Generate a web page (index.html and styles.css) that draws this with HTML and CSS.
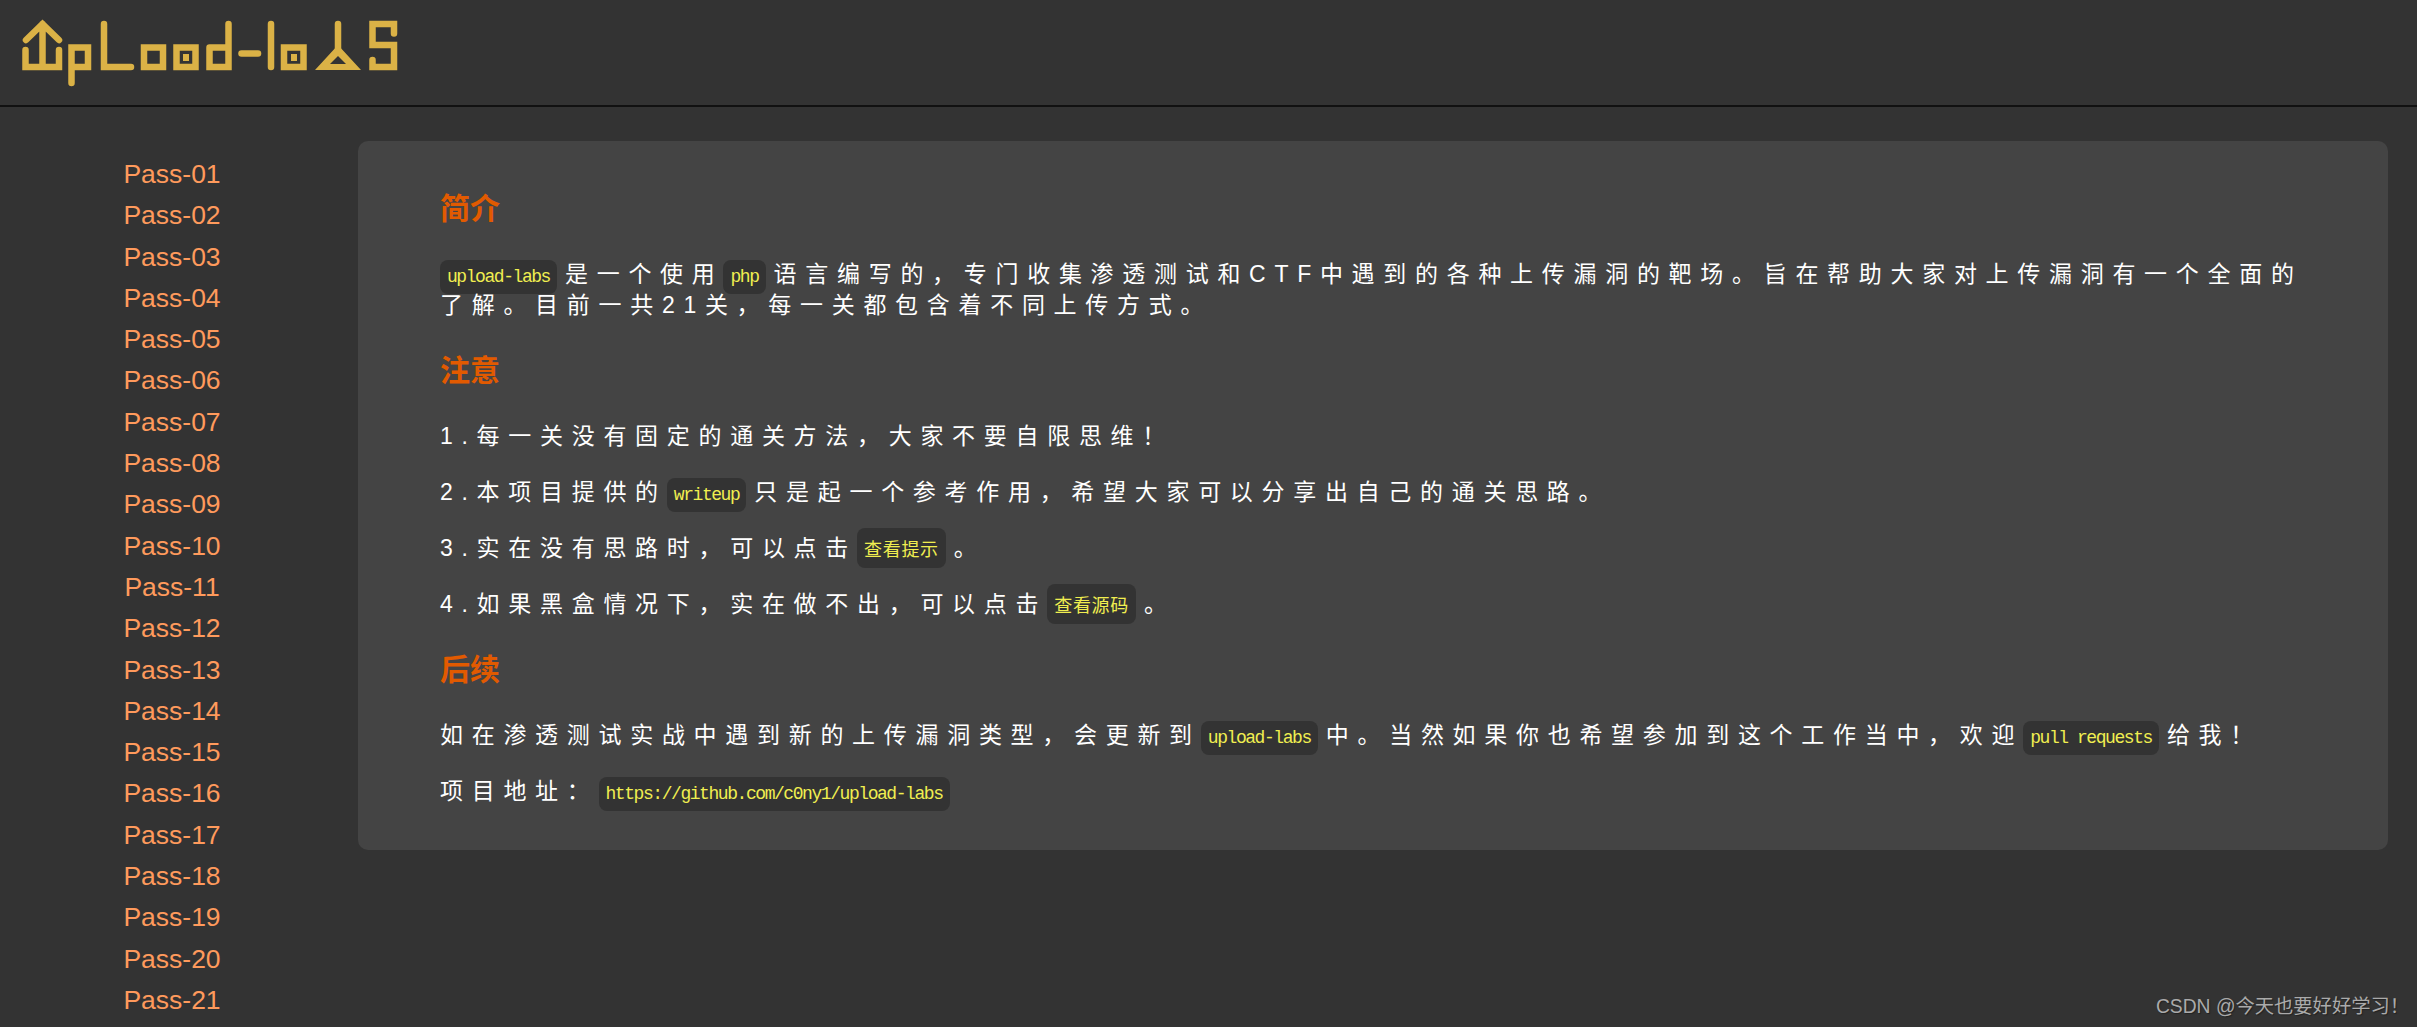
FILE: index.html
```html
<!DOCTYPE html>
<html lang="zh-CN">
<head>
<meta charset="utf-8">
<title>upload-labs</title>
<link rel="stylesheet" href="styles.css">
</head>
<body>
<header class="top">
  <svg class="logo" width="420" height="105" viewBox="0 0 420 105" role="img" aria-label="upload-labs">
    <g class="logo-line">
      <path d="M26 40 42.500 24 59 40M42.500 24V67M25.500 50V67H59V50"/>
      <path d="M71.500 83V47.500H88V67H71.500"/>
      <path d="M104 24V67H131"/>
      <path d="M144 47.500H163V67H144Z"/>
      <path d="M176.500 47.500H195.500V67H176.500Z"/>
      <path d="M209.500 47.500H228.500M228.500 24V67H209.500V47.500"/>
      <path d="M241.500 53.500H258"/>
      <path d="M271 24V67"/>
      <path d="M284 47.500H303.500V67H284Z"/>
      <path d="M338 24V50"/>
      <path d="M394 33.500V24H372.500V45H394V67H372.500V60"/>
    </g>
    <rect class="logo-fill" x="183" y="54" width="6" height="7"/>
    <rect class="logo-fill" x="291" y="54" width="6" height="7"/>
    <path class="logo-fill" fill-rule="evenodd" d="M338 45 361 70H315ZM338 56 330 64H346Z"/>
  </svg>
</header>
<div class="layout">
  <nav class="side">
    <a href="#">Pass-01</a><a href="#">Pass-02</a><a href="#">Pass-03</a><a href="#">Pass-04</a><a href="#">Pass-05</a><a href="#">Pass-06</a><a href="#">Pass-07</a><a href="#">Pass-08</a><a href="#">Pass-09</a><a href="#">Pass-10</a><a href="#">Pass-11</a><a href="#">Pass-12</a><a href="#">Pass-13</a><a href="#">Pass-14</a><a href="#">Pass-15</a><a href="#">Pass-16</a><a href="#">Pass-17</a><a href="#">Pass-18</a><a href="#">Pass-19</a><a href="#">Pass-20</a><a href="#">Pass-21</a>
  </nav>
  <main class="panel">
    <h1>简介</h1>
    <p><code>upload-labs</code>是一个使用<code>php</code>语言编写的，专门收集渗透测试和CTF中遇到的各种上传漏洞的靶场。旨在帮助大家对上传漏洞有一个全面的了解。目前一共21关，每一关都包含着不同上传方式。</p>
    <h1>注意</h1>
    <p>1.每一关没有固定的通关方法，大家不要自限思维！</p>
    <p>2.本项目提供的<code>writeup</code>只是起一个参考作用，希望大家可以分享出自己的通关思路。</p>
    <p>3.实在没有思路时，可以点击<code class="cjk">查看提示</code>。</p>
    <p>4.如果黑盒情况下，实在做不出，可以点击<code class="cjk">查看源码</code>。</p>
    <h1>后续</h1>
    <p>如在渗透测试实战中遇到新的上传漏洞类型，会更新到<code>upload-labs</code>中。当然如果你也希望参加到这个工作当中，欢迎<code>pull requests</code>给我！</p>
    <p>项目地址：<code>https://github.com/c0ny1/upload-labs</code></p>
  </main>
</div>
<div class="mark">CSDN @今天也要好好学习！</div>
</body>
</html>
```
FILE: styles.css
```css
html, body {
  margin: 0;
  height: 100%;
  overflow: hidden;
  background: #333;
}
body {
  position: relative;
  font-family: "Liberation Sans", "Noto Sans CJK SC", sans-serif;
}
.top {
  height: 105px;
  border-bottom: 2px solid #111;
}
.logo { display: block; }
.logo-line {
  fill: none;
  stroke: #dbb246;
  stroke-width: 6.500;
  stroke-linejoin: miter;
  stroke-linecap: round;
}
.logo-fill { fill: #dbb246; }
.layout {
  display: flex;
  align-items: flex-start;
  padding: 34px 29px 0 0;
}
.side {
  flex: 0 0 344px;
  margin: 13px 14px 0 0;
  display: flex;
  flex-direction: column;
  text-align: center;
}
.side a {
  color: #ff9a5c;
  font-size: 26.500px;
  line-height: 41.300px;
  text-decoration: none;
}
.panel {
  flex: 1;
  background: #444;
  border-radius: 10px;
  padding: 48px 82px 43px;
}
h1 {
  margin: 0 0 30px;
  color: #e25a00;
  font-size: 30px;
  font-weight: 700;
  line-height: 40px;
}
p + h1 { margin-top: 30px; }
p {
  margin: 0 0 25px;
  color: #fff;
  font-size: 23px;
  line-height: 31px;
  letter-spacing: 8.700px;
}
p:last-child { margin-bottom: 0; }
code {
  padding: 7px;
  margin-right: 8px;
  border-radius: 8px;
  background: #333;
  color: #f0ee50;
  font-family: "Liberation Mono", "Noto Sans CJK SC", monospace;
  font-size: 18px;
  line-height: 1;
  letter-spacing: -1.440px;
}
code.cjk {
  font-family: "Noto Sans CJK SC", sans-serif;
  letter-spacing: 0.700px;
}
.mark {
  position: absolute;
  right: 8px;
  bottom: 8px;
  color: #aaa;
  font-size: 19.300px;
  line-height: 24px;
  text-shadow: 1px 1px 1px #222;
}
```
